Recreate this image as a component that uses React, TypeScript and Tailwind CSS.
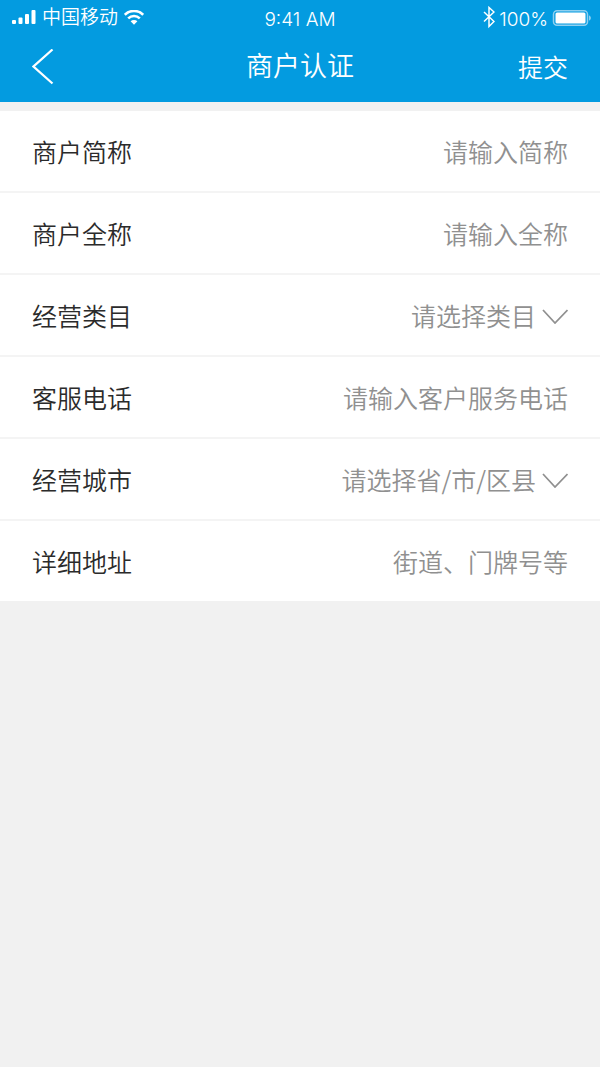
import { useState } from 'react';

interface Field {
  id: string;
  label: string;
  placeholder: string;
  type?: string;
  options?: string[];
}

const fields: Field[] = [
  { id: 'shortName', label: '商户简称', placeholder: '请输入简称' },
  { id: 'fullName', label: '商户全称', placeholder: '请输入全称' },
  { id: 'category', label: '经营类目', placeholder: '请选择类目', options: ['餐饮', '零售', '服务'] },
  { id: 'phone', label: '客服电话', placeholder: '请输入客户服务电话', type: 'tel' },
  { id: 'city', label: '经营城市', placeholder: '请选择省/市/区县', options: ['北京市', '上海市', '广州市'] },
  { id: 'address', label: '详细地址', placeholder: '街道、门牌号等' },
];

function StatusBar() {
  return (
    <div className="grid h-8 grid-cols-3 items-center px-2 text-[19px] leading-8 font-[350]">
      <div className="flex items-center gap-1.5 pl-1">
        <svg className="h-4 w-6 shrink-0" viewBox="0 0 24 16" fill="currentColor" aria-hidden="true">
          <rect x="0" y="10" width="4" height="4" rx="1" />
          <rect x="6.5" y="7.5" width="4" height="6.5" rx="1" />
          <rect x="13" y="4" width="4" height="10" rx="1" />
          <rect x="19.5" y="0" width="4" height="14" rx="1" />
        </svg>
        <span className="whitespace-nowrap">中国移动</span>
        <svg className="h-4 w-5 shrink-0" viewBox="0 0 20 16" fill="none" stroke="currentColor" aria-hidden="true">
          <path d="M0.8 4.7a13.2 13.2 0 0 1 18.4 0" strokeWidth="2.6" />
          <path d="M4.2 8.4a8.3 8.3 0 0 1 11.6 0" strokeWidth="2.6" />
          <path d="M10 14.7 6.6 11.3a4.8 4.8 0 0 1 6.8 0z" fill="currentColor" stroke="none" />
        </svg>
      </div>
      <span className="pt-1 text-center">9:41 AM</span>
      <div className="flex items-center justify-end gap-1">
        <svg className="h-6 w-3" viewBox="0 0 12 24" fill="none" stroke="currentColor" strokeWidth="1.5" aria-hidden="true">
          <path d="M1 6 11 15.5 6 20.5V1.5L11 6 1 15.5" />
        </svg>
        <span className="pt-1">100%</span>
        <svg className="h-4 w-10" viewBox="0 0 40 16" aria-hidden="true">
          <rect x="1.5" y="0.75" width="34" height="14.5" rx="3.5" fill="none" stroke="#8fd0f0" strokeWidth="1.5" />
          <rect x="3.5" y="2.5" width="30" height="11" rx="1.5" fill="#fff" />
          <path d="M37 5.5c2.5.6 2.5 4.4 0 5z" fill="#8fd0f0" />
        </svg>
      </div>
    </div>
  );
}

function FieldRow({ field }: { field: Field }) {
  const [value, setValue] = useState('');

  return (
    <div className="flex h-[82px] items-center px-8 pt-0.5 text-[25px] font-[350] last:h-20">
      <label htmlFor={field.id} className="shrink-0 text-[#2b2b2b]">
        {field.label}
      </label>
      {field.options ? (
        <>
          <select
            id={field.id}
            value={value}
            onChange={(e) => setValue(e.target.value)}
            className="min-w-0 flex-1 appearance-none bg-transparent text-[#909090] outline-none [text-align-last:right]"
          >
            <option value="">{field.placeholder}</option>
            {field.options.map((option) => (
              <option key={option} value={option}>
                {option}
              </option>
            ))}
          </select>
          <svg
            className="ml-1 h-4 w-7 shrink-0"
            viewBox="0 0 28 16"
            fill="none"
            stroke="#909090"
            strokeWidth="1.75"
            aria-hidden="true"
          >
            <path d="M3 2 15 15 27.5 2" />
          </svg>
        </>
      ) : (
        <input
          id={field.id}
          type={field.type || 'text'}
          value={value}
          placeholder={field.placeholder}
          onChange={(e) => setValue(e.target.value)}
          className="min-w-0 flex-1 bg-transparent text-right text-[#2b2b2b] outline-none placeholder:text-[#909090]"
        />
      )}
    </div>
  );
}

export default function App() {
  return (
    <div className="min-h-screen bg-[#f1f1f1] font-['Inter','Noto_Sans_CJK_SC',sans-serif]">
      <header className="bg-[#039be0] text-white">
        <StatusBar />
        <nav className="grid h-[70px] grid-cols-3 items-center px-8 font-[350]">
          <button type="button" aria-label="返回" className="justify-self-start">
            <svg className="h-9 w-6" viewBox="0 0 24 36" fill="none" stroke="currentColor" strokeWidth="2.25" aria-hidden="true">
              <path d="M20.5 0.5 1.5 17.5 20.5 34.5" />
            </svg>
          </button>
          <h1 className="text-center text-[27px]">商户认证</h1>
          <button type="submit" form="merchant" className="justify-self-end pt-1 text-[25px]">
            提交
          </button>
        </nav>
      </header>
      <form
        id="merchant"
        onSubmit={(e) => e.preventDefault()}
        className="mt-[9px] divide-y-2 divide-[#f4f4f4] bg-white font-['Noto_Sans_CJK_SC',sans-serif]"
      >
        {fields.map((field) => (
          <FieldRow key={field.id} field={field} />
        ))}
      </form>
    </div>
  );
}
